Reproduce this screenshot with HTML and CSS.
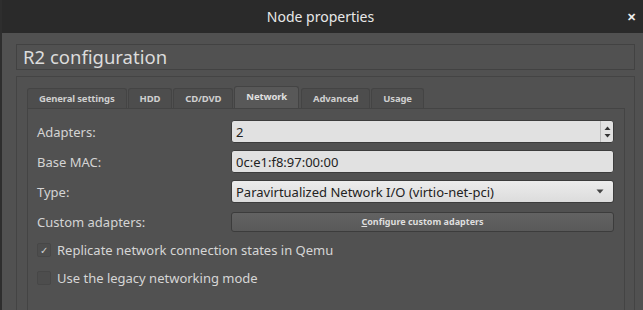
FILE: index.html
```html
<html>
<head>
<link rel="stylesheet" href="styles.css">
</head>
<body>
<div class="window">
    <div class="titlebar">
        <span class="title">Node properties</span>
        <span class="close">&#x2715;</span>
    </div>
    <div class="dialog">
        <div class="header">R2 configuration</div>
        <div class="group">
            <div class="tabs">
                <div class="tab">General settings</div>
                <div class="tab">HDD</div>
                <div class="tab">CD/DVD</div>
                <div class="tab active">Network</div>
                <div class="tab">Advanced</div>
                <div class="tab">Usage</div>
            </div>
            <div class="pane">
                <div class="row">
                    <label>Adapters:</label>
                    <div class="field spin">
                        <span class="value">2</span>
                        <span class="arrows">
                            <svg width="7" height="14" viewBox="0 0 7 14"><path d="M0.5 5 L3.5 1.5 L6.5 5 Z" fill="#333"/><path d="M0.5 9 L3.5 12.5 L6.5 9 Z" fill="#333"/></svg>
                        </span>
                    </div>
                </div>
                <div class="row">
                    <label>Base MAC:</label>
                    <div class="field"><span class="value">0c:e1:f8:97:00:00</span></div>
                </div>
                <div class="row">
                    <label>Type:</label>
                    <div class="field combo">
                        <span class="value">Paravirtualized Network I/O (virtio-net-pci)</span>
                        <svg width="8" height="5" viewBox="0 0 8 5"><path d="M0.5 0.5 L4 4.5 L7.5 0.5 Z" fill="#444"/></svg>
                    </div>
                </div>
                <div class="row">
                    <label>Custom adapters:</label>
                    <div class="button"><u>C</u>onfigure custom adapters</div>
                </div>
                <div class="check first">
                    <span class="box">&#x2713;</span>
                    <span>Replicate network connection states in Qemu</span>
                </div>
                <div class="check">
                    <span class="box"></span>
                    <span>Use the legacy networking mode</span>
                </div>
            </div>
        </div>
    </div>
</div>
</body>
</html>
```
FILE: styles.css
```css
html, body {
    margin: 0;
    padding: 0;
    background: #515151;
    overflow: hidden;
}

.window {
    width: 643px;
    height: 310px;
    overflow: hidden;
    font-family: "Noto Sans", "Open Sans", sans-serif;
    color: #d8d8d8;
    border-left: 2px solid #2e2e2e;
    box-sizing: border-box;
}

.titlebar {
    height: 33px;
    background: #2a2a2a;
    display: flex;
    align-items: center;
    justify-content: center;
    position: relative;
    color: #e8e8e8;
    font-size: 14px;
}
.title {
    margin-right: 4px;
}
.close {
    position: absolute;
    right: 7px;
    top: 9px;
    font-size: 11px;
    font-weight: bold;
    color: #eee;
}

.dialog {
    padding: 11px 8px 0 14px;
}

.header {
    height: 24px;
    border: 1px solid #424242;
    font-size: 18.5px;
    line-height: 24px;
    padding-left: 6px;
    color: #dcdcdc;
}

.group {
    margin-top: 6px;
    border: 1px solid #444;
    border-bottom: none;
    padding: 9px 9px 0 10px;
    height: 240px;
}

.tabs {
    display: flex;
    align-items: flex-end;
    height: 22px;
}
.tab {
    height: 19px;
    line-height: 19px;
    padding: 0 11px;
    margin-right: 1px;
    background: #4d4d4d;
    border: 1px solid #444;
    border-bottom: none;
    border-radius: 3px 3px 0 0;
    font-size: 9.5px;
    letter-spacing: -0.15px;
    font-weight: bold;
    color: #cfcfcf;
}
.tab.active {
    height: 21px;
    background: #585858;
    color: #e0e0e0;
    margin-right: 2px;
}

.pane {
    border: 1px solid #444;
    border-bottom: none;
    height: 220px;
    padding: 11px 10px 0 9px;
}

.row {
    display: flex;
    align-items: center;
    height: 23px;
    margin-bottom: 7px;
}
.row label {
    width: 194px;
    font-size: 13px;
    color: #d4d4d4;
}

.field {
    flex: 1;
    height: 21px;
    background: #e1e1e1;
    border: 1px solid #3c3c3c;
    border-radius: 3px;
    display: flex;
    align-items: center;
    color: #222;
    font-size: 13px;
    padding-left: 4px;
}
.field .value {
    flex: 1;
}
.spin .arrows {
    width: 12px;
    height: 21px;
    border-left: 1px solid #bbb;
    display: flex;
    align-items: center;
    justify-content: center;
}
.combo {
    padding-right: 9px;
    background: linear-gradient(#ececec, #dcdcdc);
}

.button {
    flex: 1;
    height: 18px;
    border: 1px solid #3c3c3c;
    border-radius: 3px;
    background: linear-gradient(#626262, #595959);
    font-size: 9px;
    font-weight: bold;
    color: #dedede;
    text-align: center;
    line-height: 18px;
}

.check {
    display: flex;
    align-items: center;
    height: 28px;
    font-size: 13px;
    color: #d6d6d6;
}
.check.first {
    margin-top: -4px;
}
.check .box {
    width: 12px;
    height: 12px;
    border: 1px solid #474747;
    background: #4d4d4d;
    border-radius: 2px;
    margin-right: 6px;
    font-size: 10px;
    line-height: 12px;
    text-align: center;
    color: #d0d0d0;
}
```
